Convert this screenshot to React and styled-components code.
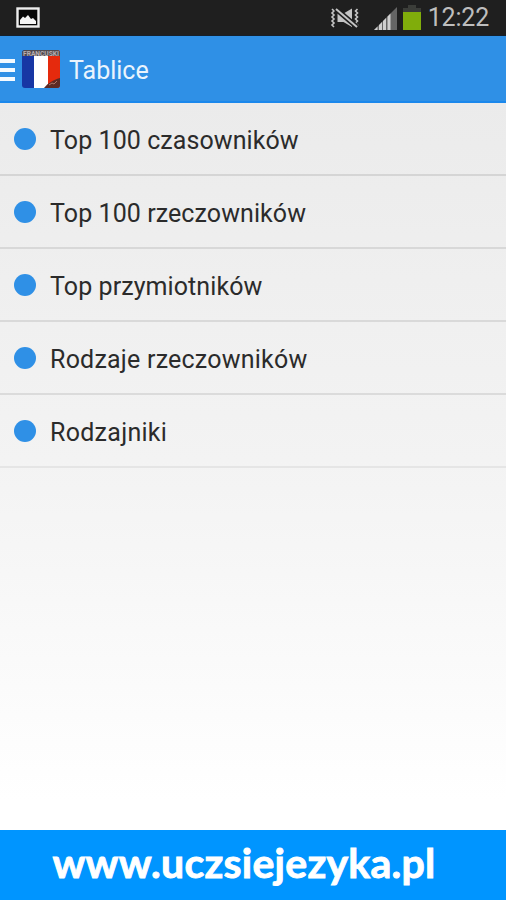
import React from "react";
import styled, { createGlobalStyle } from "styled-components";

const GlobalStyle = createGlobalStyle`
  * {
    box-sizing: border-box;
  }

  body {
    margin: 0;
    font-family: Roboto, "Noto Sans", sans-serif;
  }
`;

const Screen = styled.div`
  display: flex;
  flex-direction: column;
  width: 506px;
  height: 900px;
  overflow: hidden;
  background: linear-gradient(#ebebeb 100px, #f3f3f3 460px, #ffffff 800px);
`;

const StatusBar = styled.div`
  display: flex;
  align-items: center;
  height: 36px;
  padding: 0 17px 0 16px;
  background-color: #1f1f1f;
  border-bottom: 1px solid #15202c;
`;

const StatusIcons = styled.div`
  display: flex;
  align-items: center;
  margin-left: auto;
`;

const Clock = styled.span`
  margin-left: 7px;
  color: #bebebe;
  font-size: 25px;
  line-height: 35px;
  letter-spacing: -0.2px;
`;

const ActionBar = styled.header`
  display: flex;
  align-items: center;
  height: 67px;
  padding-top: 1px;
  background-color: #2f90e6;
  border-bottom: 2px solid #1b88ec;
`;

const MenuIcon = styled.div`
  display: flex;
  flex-direction: column;
  gap: 5px;
  width: 15px;
  margin: 2px 7px 0 0;
`;

const MenuLine = styled.span`
  height: 4px;
  background-color: #f4faff;
`;

const Title = styled.h1`
  margin: 4px 0 0 9px;
  color: #eaf4fd;
  font-size: 25px;
  font-weight: 400;
  line-height: 60px;
`;

const List = styled.ul`
  margin: 0;
  padding: 0;
  list-style: none;
`;

const Row = styled.li`
  display: flex;
  align-items: center;
  height: 73px;
  padding: 1px 0 0 14px;
  border-bottom: 2px solid ${props => props.$line};
`;

const Dot = styled.span`
  width: 22px;
  height: 22px;
  border-radius: 50%;
  background-color: #2f90e6;
`;

const Label = styled.span`
  margin: 3px 0 0 14px;
  color: #2b2b2b;
  font-size: 25px;
  line-height: 30px;
  letter-spacing: ${props => props.$spacing || "0.08px"};
`;

const Footer = styled.footer`
  display: flex;
  justify-content: center;
  height: 70px;
  margin-top: auto;
  padding-right: 18px;
  background-color: #0095ff;
  color: #ffffff;
  font-family: Lato, "Open Sans", sans-serif;
  font-size: 41px;
  font-weight: 700;
  line-height: 65px;
  letter-spacing: 0.25px;
  -webkit-text-stroke: 0.9px #ffffff;
  white-space: nowrap;
`;

const rows = [
  { text: "Top 100 czasowników", line: "#d5d5d5" },
  { text: "Top 100 rzeczowników", line: "#d8d8d8" },
  { text: "Top przymiotników", line: "#d9d9d9" },
  { text: "Rodzaje rzeczowników", line: "#dbdbdb", spacing: "0.22px" },
  { text: "Rodzajniki", line: "#e5e5e5", spacing: "0.28px" },
];

const PictureIcon = () => (
  <svg width="24" height="21" viewBox="0 0 24 21">
    <rect x="1.5" y="1.5" width="21" height="18" fill="#080808" stroke="#eeeeee" strokeWidth="2.4" />
    <path d="M4 17v-4l3-3.500 2 1.500 3-3 3 4 2-1 3 3v3z" fill="#f5f5f5" />
  </svg>
);

const MutedSvg = styled.svg`
  margin-right: 13px;
`;

const MutedIcon = () => (
  <MutedSvg width="32" height="22" viewBox="0 0 32 22" fill="none" stroke="#c4c4c4">
    <path d="M3 2l2 2-2 2 2 2-2 2 2 2-2 2 2 2-2 2 2 2M28.500 2l-2 2 2 2-2 2 2 2-2 2 2 2-2 2 2 2-2 2" strokeWidth="1.600" />
    <path d="M8.500 6.500h6L23 1.500v18.500l-8.500-5h-6z" fill="#c4c4c4" stroke="none" />
    <path d="M7 2l21 18" stroke="#1f1f1f" strokeWidth="5" />
    <path d="M7 2l21 18" strokeWidth="2" />
  </MutedSvg>
);

const SignalSvg = styled.svg`
  margin: 1px 6px 0 0;
`;

const SignalIcon = () => (
  <SignalSvg width="23" height="23" viewBox="0 0 23 23">
    <path d="M0 23L23 0v23z" fill="#656565" />
    <path d="M0 23l3.500-3.500V23zM5 23v-5l3-3v8zM9 23v-9l3-3v12zM13.500 23V9.500l3-3V23z" fill="#d0d0d0" />
  </SignalSvg>
);

const BatteryIcon = () => (
  <svg width="18" height="25" viewBox="0 0 18 25">
    <path d="M5 0h8v3h5v5H0V3h5z" fill="#3b3d39" />
    <rect y="7" width="18" height="18" fill="#80ad0b" />
  </svg>
);

const FlagText = styled.text`
  font-family: Roboto, sans-serif;
  font-size: 7px;
  font-weight: 700;
`;

const FlagIcon = () => (
  <svg width="38" height="38" viewBox="0 0 38 38">
    <defs>
      <clipPath id="flag">
        <rect width="38" height="38" rx="3" />
      </clipPath>
    </defs>
    <g clipPath="url(#flag)">
      <rect width="12" height="38" fill="#1736a4" />
      <rect x="12" width="14" height="38" fill="#ffffff" />
      <rect x="26" width="12" height="38" fill="#e52a0d" />
      <rect width="38" height="6" fill="#514b50" />
      <FlagText x="1" y="6" textLength="36" lengthAdjust="spacingAndGlyphs" fill="#b8aeb0">FRANCUSKI</FlagText>
      <path d="M22 38c4-5 9-8 16-10v10z" fill="#5c2a25" />
      <path d="M27 35l3-2 2 1 3-3" fill="none" stroke="#b17568" />
    </g>
  </svg>
);

const App = () => (
  <>
    <GlobalStyle />
    <Screen>
      <StatusBar>
        <PictureIcon />
        <StatusIcons>
          <MutedIcon />
          <SignalIcon />
          <BatteryIcon />
          <Clock>12:22</Clock>
        </StatusIcons>
      </StatusBar>
      <ActionBar>
        <MenuIcon>
          <MenuLine />
          <MenuLine />
          <MenuLine />
        </MenuIcon>
        <FlagIcon />
        <Title>Tablice</Title>
      </ActionBar>
      <List>
        {rows.map(row => (
          <Row key={row.text} $line={row.line}>
            <Dot />
            <Label $spacing={row.spacing}>{row.text}</Label>
          </Row>
        ))}
      </List>
      <Footer>www.uczsiejezyka.pl</Footer>
    </Screen>
  </>
);

export default App;
